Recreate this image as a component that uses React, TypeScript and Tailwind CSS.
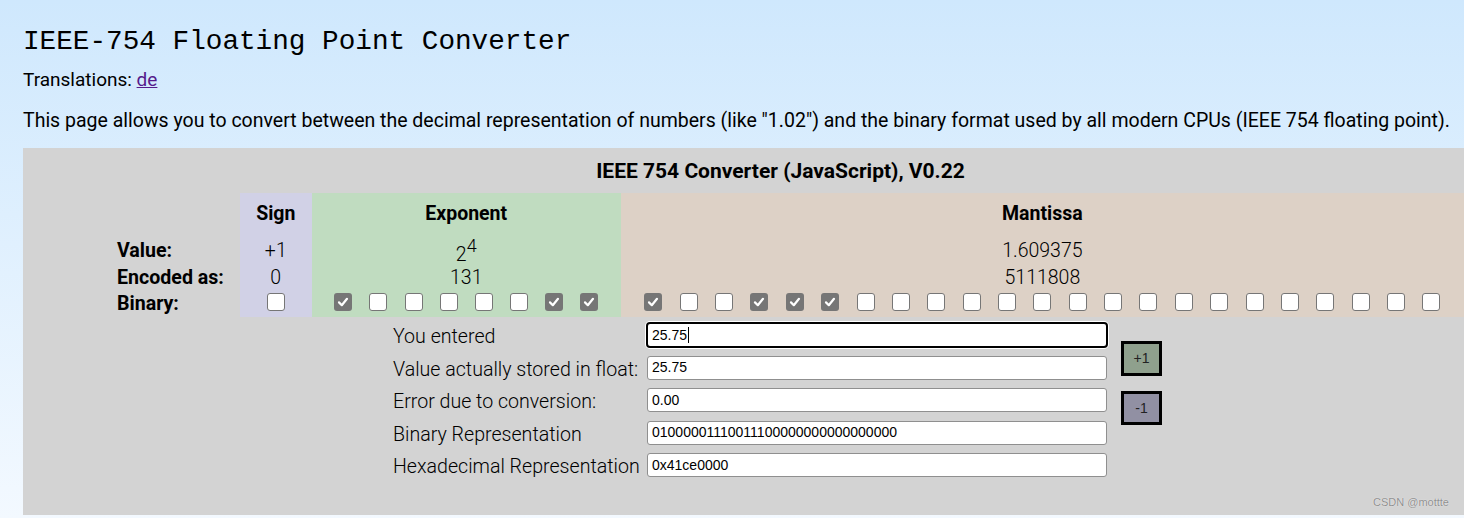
import React from "react";

const expBits = [1, 0, 0, 0, 0, 0, 1, 1];
const manBits = [1, 0, 0, 1, 1, 1, 0, 0, 0, 0, 0, 0, 0, 0, 0, 0, 0, 0, 0, 0, 0, 0, 0];

function Box({ on }: { on: boolean }) {
  return on ? (
    <span className="flex h-[18px] w-[18px] items-center justify-center rounded-[3px] bg-[#767676]">
      <svg width="12" height="12" viewBox="0 0 12 12">
        <path d="M2 6.4 L4.8 9.2 L10 2.8" fill="none" stroke="white" strokeWidth="2.2" strokeLinecap="round" strokeLinejoin="round" />
      </svg>
    </span>
  ) : (
    <span className="block h-[18px] w-[18px] rounded-[3px] border-[1.5px] border-[#767676] bg-white" />
  );
}

const font = { fontFamily: "Roboto, 'Noto Sans', sans-serif" };

export default function App() {
  return (
    <div
      className="relative h-[518px] w-[1464px] overflow-hidden bg-gradient-to-b from-[#cfe8fd] to-[#f3f9ff] pl-[23px] text-black"
      style={font}
    >
      <h1 className="pt-[25px] text-[27.7px] leading-[33px] font-normal" style={{ fontFamily: "'Liberation Mono', monospace" }}>
        IEEE-754 Floating Point Converter
      </h1>
      <div className="mt-[10px] text-[19px] leading-[24px]">
        Translations: <span className="text-[#551a8b] underline">de</span>
      </div>
      <p className="mt-[17px] text-[19.5px] leading-[24px] whitespace-nowrap">
        This page allows you to convert between the decimal representation of numbers (like "1.02") and the binary format used by all modern CPUs (IEEE 754 floating point).
      </p>
      <div className="mt-[15px] h-[367px] bg-[#d3d3d3]">
        <div className="flex h-[45px] items-center justify-center pt-[2px] pl-[74px] text-[21px] font-bold">
          IEEE 754 Converter (JavaScript), V0.22
        </div>
        <div className="flex">
          <div className="w-[217px] pl-[94px] text-[19.6px] font-bold">
            <div className="h-[40px]" />
            <div className="flex h-[32px] items-center pt-[4px]">Value:</div>
            <div className="flex h-[22px] items-center pt-[3px]">Encoded as:</div>
            <div className="flex h-[30px] items-center pt-[3px]">Binary:</div>
          </div>
          <div className="w-[72px] bg-[#d1d1e6] text-[19.5px]">
            <div className="flex h-[40px] items-center justify-center pt-[2px] font-bold">Sign</div>
            <div className="flex h-[32px] items-center justify-center pt-[4px] font-light">+1</div>
            <div className="flex h-[22px] items-center justify-center pt-[3px] font-light">0</div>
            <div className="flex h-[30px] items-center justify-center">
              <Box on={false} />
            </div>
          </div>
          <div className="w-[309px] bg-[#c0dcc0] text-[19.5px]">
            <div className="flex h-[40px] items-center justify-center pt-[2px] font-bold">Exponent</div>
            <div className="flex h-[32px] items-center justify-center pt-[3px] font-light">
              <span className="relative top-[4px]">2</span>
              <span className="relative top-[-5px] text-[18px]">4</span>
            </div>
            <div className="flex h-[22px] items-center justify-center pt-[3px] font-light">131</div>
            <div className="flex h-[30px] items-center px-[14px]">
              {expBits.map((b, i) => (
                <div key={i} className="flex w-[35.125px] justify-center">
                  <Box on={b === 1} />
                </div>
              ))}
            </div>
          </div>
          <div className="flex-1 bg-[#ddd1c6] text-[19.5px]">
            <div className="flex h-[40px] items-center justify-center pt-[2px] font-bold">Mantissa</div>
            <div className="flex h-[32px] items-center justify-center pt-[4px] font-light">1.609375</div>
            <div className="flex h-[22px] items-center justify-center pt-[3px] font-light">5111808</div>
            <div className="flex h-[30px] items-center px-[15px]">
              {manBits.map((b, i) => (
                <div key={i} className="flex w-[35.36px] justify-center">
                  <Box on={b === 1} />
                </div>
              ))}
            </div>
          </div>
        </div>
        <div className="flex pt-[2px]">
          <div className="w-[370px]" />
          <div className="w-[253px] text-[19.6px] font-light whitespace-nowrap">
            <div className="flex h-[32.5px] items-center pt-[3px]">You entered</div>
            <div className="flex h-[32.5px] items-center pt-[3px]">Value actually stored in float:</div>
            <div className="flex h-[32.5px] items-center pt-[3px]">Error due to conversion:</div>
            <div className="flex h-[32.5px] items-center pt-[3px]">Binary Representation</div>
            <div className="flex h-[32.5px] items-center pt-[3px]">Hexadecimal Representation</div>
          </div>
          <div className="w-[462px] text-[14px]" style={{ fontFamily: "'Liberation Sans', Arial, sans-serif" }}>
            <div className="flex h-[32.5px] items-center">
              <div className="flex h-[26px] w-[462px] items-center rounded-[4px] border-2 border-black bg-white pl-[4px] shadow-[0_0_0_1px_white]">
                25.75<span className="ml-px inline-block h-[16px] w-px bg-black" />
              </div>
            </div>
            {["25.75", "0.00", "01000001110011100000000000000000", "0x41ce0000"].map((v, i) => (
              <div key={i} className="flex h-[32.5px] items-center pl-px">
                <div className="flex h-[24px] w-[460px] items-center rounded-[3px] border border-[#8f8f8f] bg-white pl-[4px]">
                  {v}
                </div>
              </div>
            ))}
          </div>
          <div className="ml-[13px] flex flex-col pt-[22px] text-[14px]" style={{ fontFamily: "'Liberation Sans', Arial, sans-serif" }}>
            <div className="flex h-[35px] w-[41px] items-center justify-center border-[3px] border-black bg-[#8fa08d] text-[#222]">+1</div>
            <div className="mt-[15px] flex h-[34px] w-[41px] items-center justify-center border-[3px] border-black bg-[#9190a3] text-[#222]">-1</div>
          </div>
        </div>
      </div>
      <div
        className="absolute right-[15px] bottom-[8px] text-[11px] text-[#8f8f8f]"
        style={{ fontFamily: "'Liberation Sans', Arial, sans-serif", textShadow: "0 0 1px #fff" }}
      >
        CSDN @mottte
      </div>
    </div>
  );
}
